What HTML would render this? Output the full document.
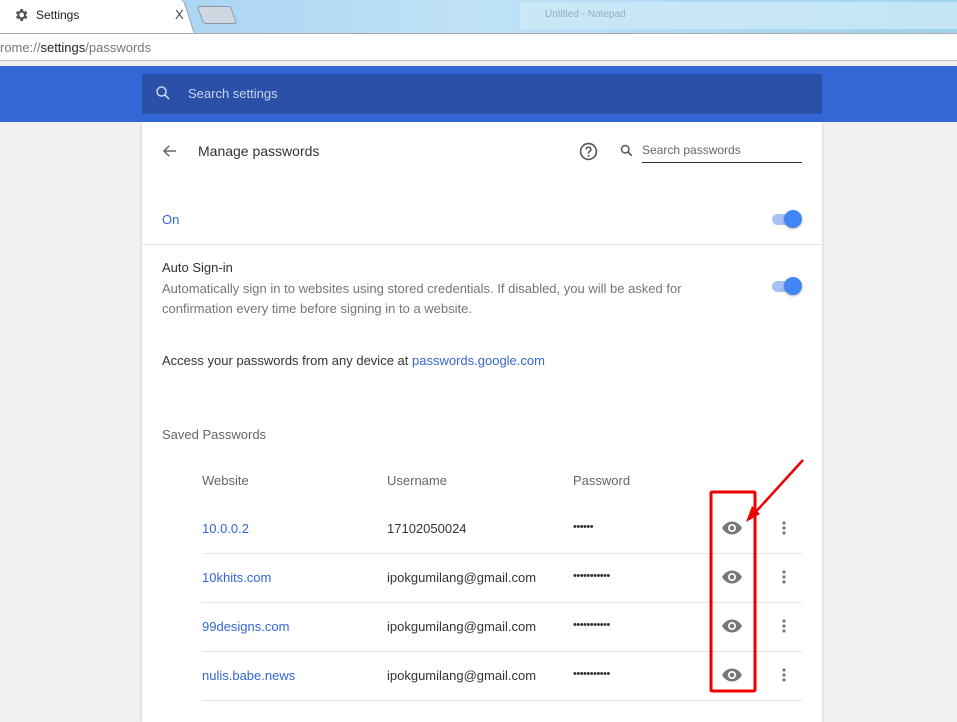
<!DOCTYPE html>
<html><head><meta charset="utf-8"><style>
*{margin:0;padding:0;box-sizing:border-box}
body{width:957px;height:708px;overflow:hidden;background:#f1f1f1;font-family:"Liberation Sans",sans-serif;position:relative;color:#333}
.abs{position:absolute}
.t{font-size:13px;letter-spacing:0;white-space:nowrap}
.pw{font-size:11px;letter-spacing:-0.5px}
.link{color:#3367d6}
.sep{position:absolute;height:1px;background:#e6e6e6}
.tog{position:absolute;width:32px;height:18px}
.tog .tr{position:absolute;left:2px;top:4px;width:28px;height:11px;border-radius:6px;background:#a6c2f5}
.tog .kn{position:absolute;right:0;top:0;width:18px;height:18px;border-radius:50%;background:#4285f4;box-shadow:0 1px 2px rgba(0,0,0,.3)}
</style></head><body>
<div class="abs" style="left:0;top:0;width:957px;height:33px;background:linear-gradient(90deg,#9fcdf0,#bfe2f7 50%,#9ed1ee)"></div>
<div class="abs" style="left:520px;top:2px;width:437px;height:27px;background:#cdeaf6;opacity:.8"></div>
<div class="abs t" style="left:545px;top:9px;font-size:10px;color:#9ab">Untitled - Notepad</div>
<div class="abs" style="left:0;top:0;width:195px;height:34px;background:#fff;border-right:1px solid #999;border-radius:0 4px 0 0;transform:skewX(18deg);transform-origin:bottom"></div>
<div class="abs" style="left:200px;top:6px;width:34px;height:18px;background:#cfd8e0;border:1px solid #8a9aa8;border-radius:3px;transform:skewX(20deg)"></div>
<svg class="abs" style="left:13px;top:7px" width="16" height="16" viewBox="0 0 24 24"><path fill="#555" d="M19.4 13a7.5 7.5 0 0 0 0-2l2.1-1.6-2-3.5-2.5 1a7 7 0 0 0-1.7-1L15 3h-4l-.4 2.9a7 7 0 0 0-1.700 1l-2.5-1-2 3.5L6.6 11a7.5 7.5 0 0 0 0 2l-2.1 1.6 2 3.5 2.5-1a7 7 0 0 0 1.7 1L11 21h4l.4-2.9a7 7 0 0 0 1.7-1l2.5 1 2-3.5zM13 15.5a3.5 3.5 0 1 1 0-7 3.5 3.5 0 0 1 0 7z"/></svg>
<div class="abs t" style="left:36px;top:8px;font-size:12px;color:#222">Settings</div>
<div class="abs t" style="left:175px;top:7px;font-size:13px;color:#444">X</div>
<div class="abs" style="left:0;top:33px;width:957px;height:28px;background:#fff;border-top:1px solid #aaa;border-bottom:1px solid #bbb"></div>
<div class="abs t" style="left:0;top:40px;font-size:13px;color:#777">rome://<span style="color:#222">settings</span>/passwords</div>
<div class="abs" style="left:0;top:61px;width:957px;height:5px;background:#f1f1f1"></div>
<div class="abs" style="left:0;top:66px;width:957px;height:56px;background:#3367d6"></div>
<div class="abs" style="left:142px;top:74px;width:680px;height:40px;background:#2a50a8;border-radius:2px"></div>
<svg class="abs" style="left:154px;top:84px" width="18" height="18" viewBox="0 0 24 24"><circle cx="10" cy="10" r="6" fill="none" stroke="#c8d4f0" stroke-width="2"/><path d="M14.5 14.5l5.5 5.5" stroke="#c8d4f0" stroke-width="2.2"/></svg>
<div class="abs t" style="left:188px;top:86px;color:#c8d4f0">Search settings</div>
<div class="abs" style="left:142px;top:122px;width:680px;height:600px;background:#fff;box-shadow:0 1px 3px rgba(0,0,0,.2)"></div>
<svg class="abs" style="left:161px;top:142px" width="18" height="18" viewBox="0 0 24 24"><path d="M20 12H5M11 5l-7 7 7 7" fill="none" stroke="#666" stroke-width="2"/></svg>
<div class="abs t" style="left:198px;top:143px;font-size:14px;color:#333">Manage passwords</div>
<svg class="abs" style="left:579px;top:142px" width="19" height="19" viewBox="0 0 24 24"><circle cx="12" cy="12" r="10" fill="none" stroke="#555" stroke-width="2"/><path d="M9 9.5a3 3 0 1 1 4 2.8c-.8.4-1 .9-1 1.7v.5" fill="none" stroke="#555" stroke-width="2"/><circle cx="12" cy="17.5" r="1.2" fill="#555"/></svg>
<svg class="abs" style="left:619px;top:143px" width="15" height="15" viewBox="0 0 24 24"><circle cx="10" cy="10" r="6" fill="none" stroke="#555" stroke-width="2.4"/><path d="M14.5 14.5l6 6" stroke="#555" stroke-width="2.6"/></svg>
<div class="abs t" style="left:642px;top:143px;font-size:12px;color:#666">Search passwords</div>
<div class="abs" style="left:642px;top:162px;width:160px;height:1px;background:#333"></div>
<div class="abs t link" style="left:162px;top:212px">On</div>
<div class="tog" style="left:770px;top:210px"><div class="tr"></div><div class="kn"></div></div>
<div class="sep" style="left:142px;top:244px;width:680px"></div>
<div class="abs t" style="left:162px;top:260px;color:#333">Auto Sign-in</div>
<div class="abs t" style="left:162px;top:279px;color:#757575;line-height:20px">Automatically sign in to websites using stored credentials. If disabled, you will be asked for<br>confirmation every time before signing in to a website.</div>
<div class="tog" style="left:770px;top:277px"><div class="tr"></div><div class="kn"></div></div>
<div class="abs t" style="left:162px;top:353px;color:#333">Access your passwords from any device at <span class="link">passwords.google.com</span></div>
<div class="abs t" style="left:162px;top:427px;color:#666">Saved Passwords</div>
<div class="abs t" style="left:202px;top:473px;color:#666">Website</div>
<div class="abs t" style="left:387px;top:473px;color:#666">Username</div>
<div class="abs t" style="left:573px;top:473px;color:#666">Password</div>

<div class="abs t link" style="left:202px;top:521px">10.0.0.2</div>
<div class="abs t" style="left:387px;top:521px">17102050024</div>
<div class="abs t pw" style="left:573px;top:521px">••••••</div>
<div class="sep" style="left:202px;top:553px;width:600px"></div>
<div class="abs t link" style="left:202px;top:570px">10khits.com</div>
<div class="abs t" style="left:387px;top:570px">ipokgumilang@gmail.com</div>
<div class="abs t pw" style="left:573px;top:570px">•••••••••••</div>
<div class="sep" style="left:202px;top:602px;width:600px"></div>
<div class="abs t link" style="left:202px;top:619px">99designs.com</div>
<div class="abs t" style="left:387px;top:619px">ipokgumilang@gmail.com</div>
<div class="abs t pw" style="left:573px;top:619px">•••••••••••</div>
<div class="sep" style="left:202px;top:651px;width:600px"></div>
<div class="abs t link" style="left:202px;top:668px">nulis.babe.news</div>
<div class="abs t" style="left:387px;top:668px">ipokgumilang@gmail.com</div>
<div class="abs t pw" style="left:573px;top:668px">•••••••••••</div>
<div class="sep" style="left:202px;top:700px;width:600px"></div>

<svg class="abs" style="left:0;top:0" width="957" height="708">
<defs>
<g id="eye"><path d="M-10 0C-7-5-3-6.5 0-6.5S7-5 10 0C7 5 3 6.5 0 6.5S-7 5-10 0z" fill="#777"/><circle r="4" fill="#fff"/><circle r="2.3" fill="#777"/></g>
<g id="dots"><circle cy="-5" r="1.6" fill="#777"/><circle r="1.6" fill="#777"/><circle cy="5" r="1.6" fill="#777"/></g>
</defs>
<use href="#eye" x="732" y="528"/><use href="#dots" x="784" y="528"/>
<use href="#eye" x="732" y="577"/><use href="#dots" x="784" y="577"/>
<use href="#eye" x="732" y="626"/><use href="#dots" x="784" y="626"/>
<use href="#eye" x="732" y="675"/><use href="#dots" x="784" y="675"/>
<rect x="711" y="492" width="44" height="199" fill="none" stroke="#e00" stroke-width="3" rx="1"/>
<path d="M803 460L752 516" stroke="#e00" stroke-width="2.5"/>
<path d="M746 522L752 506 760 514z" fill="#e00"/>
</svg>
</body></html>
